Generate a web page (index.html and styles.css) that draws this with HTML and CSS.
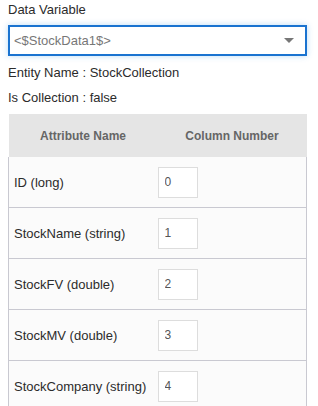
FILE: index.html
```html
<!DOCTYPE html>
<html lang="en">
<head>
    <meta charset="UTF-8">
    <meta name="viewport" content="width=device-width, initial-scale=1.0">
    <title>Data Variable</title>
    <link rel="stylesheet" href="styles.css">
</head>
<body>
    <div class="panel">
        <div class="field-label">Data Variable</div>
        <div class="select-box">
            <span class="select-value">&lt;$StockData1$&gt;</span>
            <span class="select-arrow"></span>
        </div>
        <div class="info-line">Entity Name : StockCollection</div>
        <div class="info-line">Is Collection : false</div>

        <table class="mapping-table">
            <colgroup>
                <col class="col-name">
                <col class="col-number">
            </colgroup>
            <thead>
                <tr>
                    <th>Attribute Name</th>
                    <th>Column Number</th>
                </tr>
            </thead>
            <tbody>
                <tr>
                    <td class="attr-name">ID (long)</td>
                    <td class="attr-col"><input type="text" class="col-input" value="0"></td>
                </tr>
                <tr>
                    <td class="attr-name">StockName (string)</td>
                    <td class="attr-col"><input type="text" class="col-input" value="1"></td>
                </tr>
                <tr>
                    <td class="attr-name">StockFV (double)</td>
                    <td class="attr-col"><input type="text" class="col-input" value="2"></td>
                </tr>
                <tr>
                    <td class="attr-name">StockMV (double)</td>
                    <td class="attr-col"><input type="text" class="col-input" value="3"></td>
                </tr>
                <tr>
                    <td class="attr-name">StockCompany (string)</td>
                    <td class="attr-col"><input type="text" class="col-input" value="4"></td>
                </tr>
            </tbody>
        </table>
    </div>
</body>
</html>
```

FILE: styles.css
```css
body, html {
    margin: 0;
    padding: 0;
    background-color: #fff;
    font-family: "Liberation Sans", Arial, sans-serif;
    font-size: 13px;
    color: #2b2b2b;
    overflow: hidden;
}

.panel {
    padding: 2px 11px 0 8px;
}

.field-label {
    line-height: 16px;
    margin-bottom: 7px;
}

.select-box {
    box-sizing: border-box;
    height: 31px;
    border: 2px solid #1a73d0;
    box-shadow: 0 0 6px rgba(30, 136, 229, 0.3);
    display: flex;
    align-items: center;
    justify-content: space-between;
    padding: 0 11px 0 4px;
    background-color: #fff;
}

.select-value {
    color: #777;
}

.select-arrow {
    width: 0;
    height: 0;
    border-left: 5px solid transparent;
    border-right: 5px solid transparent;
    border-top: 5px solid #777;
}

.info-line {
    line-height: 16px;
    margin-top: 9px;
}

.mapping-table {
    width: 299px;
    margin-top: 8px;
    border-collapse: collapse;
    table-layout: fixed;
}

.col-name {
    width: 149px;
}

.mapping-table th {
    height: 43px;
    padding: 0;
    background-color: #e5e5e5;
    color: #666;
    font-size: 12px;
    font-weight: bold;
    text-align: center;
}

.mapping-table td {
    height: 50px;
    padding: 0;
    background-color: #fbfbfb;
    border-bottom: 1px solid #c9c9d1;
    vertical-align: middle;
}

.mapping-table td.attr-name {
    padding-left: 5px;
    border-left: 1px solid #c9c9d1;
}

.mapping-table td.attr-col {
    border-right: 1px solid #c9c9d1;
}

.col-input {
    box-sizing: border-box;
    width: 40px;
    height: 31px;
    border: 1px solid #ddd;
    background-color: #fff;
    padding: 0 6px;
    font-family: "Liberation Sans", Arial, sans-serif;
    font-size: 12px;
    color: #555;
    outline: none;
}
```
